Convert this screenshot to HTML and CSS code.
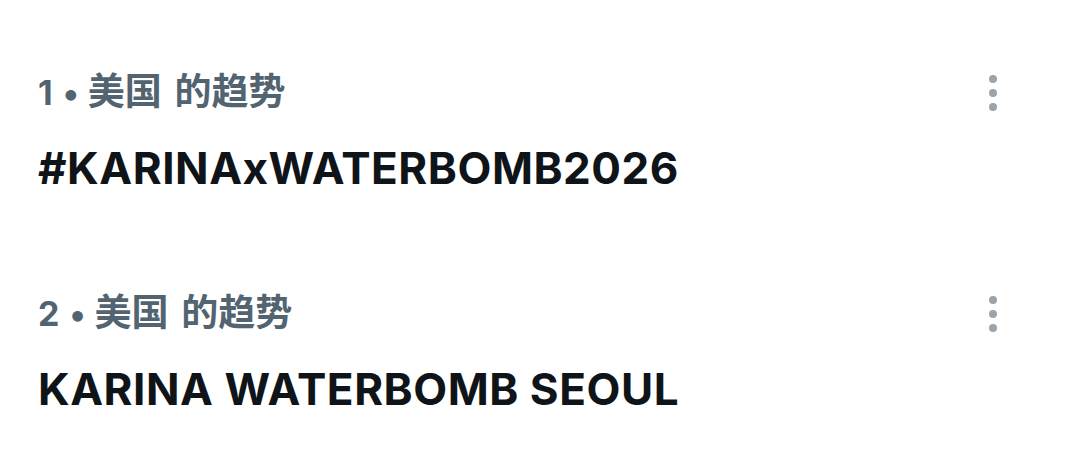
FILE: index.html
```html
<!DOCTYPE html>
<html lang="zh-CN">
<head>
<meta charset="utf-8">
<title>趋势</title>
<link rel="stylesheet" href="styles.css">
</head>
<body>
<main class="trends">
  <section class="trend">
    <div class="trend-body">
      <div class="trend-meta">1<span class="sep">•</span><span class="place">美国 的趋势</span></div>
      <div class="trend-title">#KARINAxWATERBOMB2026</div>
    </div>
    <button class="more" aria-label="更多">
      <svg width="16" height="38" viewBox="0 0 16 38"><circle cx="8" cy="5" r="4"/><circle cx="8" cy="19" r="4"/><circle cx="8" cy="33" r="4"/></svg>
    </button>
  </section>
  <section class="trend">
    <div class="trend-body">
      <div class="trend-meta">2<span class="sep">•</span><span class="place">美国 的趋势</span></div>
      <div class="trend-title">KARINA WATERBOMB SEOUL</div>
    </div>
    <button class="more" aria-label="更多">
      <svg width="16" height="38" viewBox="0 0 16 38"><circle cx="8" cy="5" r="4"/><circle cx="8" cy="19" r="4"/><circle cx="8" cy="33" r="4"/></svg>
    </button>
  </section>
</main>
</body>
</html>
```

FILE: styles.css
```css
html, body {
  margin: 0;
  background: #ffffff;
}

body {
  font-family: Inter, "Noto Sans CJK SC", sans-serif;
  font-weight: 700;
}

.trends {
  display: flex;
  flex-direction: column;
}

.trend {
  display: flex;
  justify-content: space-between;
  align-items: flex-start;
  padding: 72px 77px 27px 38px;
}

.trend-body {
  display: flex;
  flex-direction: column;
}

.trend-meta {
  height: 40px;
  font-size: 34px;
  line-height: 40px;
  color: #536471;
  margin-bottom: 30px;
  white-space: nowrap;
}

.sep {
  margin: 0 9px 0 10px;
}

.place {
  font-size: 37px;
  word-spacing: 4px;
}

.trend-title {
  font-size: 44px;
  line-height: 52px;
  letter-spacing: 0.55px;
  color: #0f1419;
}

.more {
  margin: 2px 0 0 0;
  padding: 0;
  border: 0;
  background: none;
  display: flex;
}

.more svg {
  fill: #9ba3ab;
}
```
